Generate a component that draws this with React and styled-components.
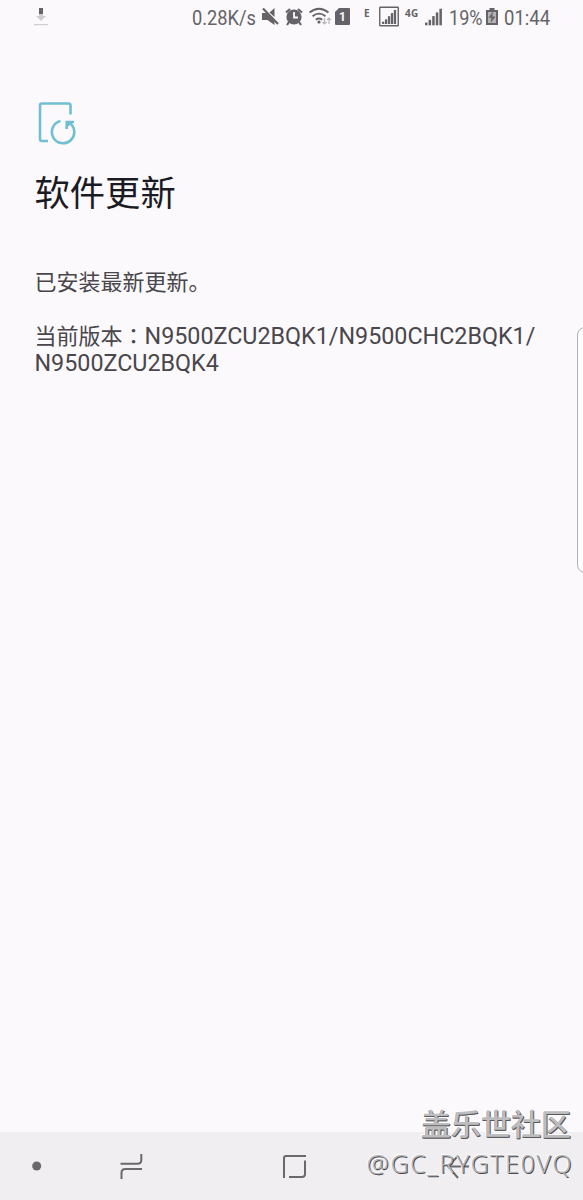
import React from 'react';
import styled, { createGlobalStyle } from 'styled-components';

const GlobalStyle = createGlobalStyle`
    * { box-sizing: border-box; }
    body {
        margin: 0;
        background: #fbf9fc;
        font-family: Roboto, "Noto Sans CJK SC", sans-serif;
    }
`;

const Screen = styled.div`
    position: relative;
    display: flex;
    flex-direction: column;
    width: 583px;
    height: 1200px;
    overflow: hidden;
    background: #fbf9fc;
`;

const StatusBar = styled.header`
    display: flex;
    align-items: flex-start;
    height: 36px;
    color: #656367;
`;

const StatusIcon = styled.svg`
    flex: none;
    width: ${(props) => props.$width}px;
    height: 36px;
    margin-left: ${(props) => props.$gap || 0}px;
    fill: currentColor;
`;

const StatusText = styled.span`
    flex: none;
    width: ${(props) => props.$width}px;
    margin-left: ${(props) => props.$gap}px;
    font-size: 21px;
    line-height: 36px;
    white-space: nowrap;
    transform: scaleX(${(props) => props.$squeeze});
    transform-origin: left;
`;

const NetworkType = styled.span`
    flex: none;
    width: ${(props) => props.$width}px;
    margin-left: ${(props) => props.$gap}px;
    font: bold 10px/26px "Noto Sans", sans-serif;
    letter-spacing: 0.4px;
`;

const Content = styled.main`
    flex: 1;
    padding: 65px 34.5px 0;
`;

const UpdateIcon = styled.svg`
    display: block;
    width: 42px;
    height: 44px;
    fill: none;
    stroke: #72bfd3;
    stroke-width: 2.6;
`;

const Title = styled.h1`
    margin: 23px 0 0;
    font-size: 35.3px;
    font-weight: 400;
    line-height: 52px;
    color: #1b1b23;
`;

const Message = styled.p`
    margin: ${(props) => props.$top}px 0 0;
    font-size: 22px;
    line-height: 27px;
    color: #49474b;
    white-space: nowrap;
`;

const Colon = styled.span`
    font-family: "Noto Sans CJK TC", sans-serif;
    line-height: 1;
`;

const Version = styled.span`
    font-size: 23.3px;
`;

const EdgeHandle = styled.div`
    position: absolute;
    top: 327px;
    left: 577px;
    width: 20px;
    height: 246px;
    border: 1px solid #b3b1b5;
    border-radius: 8px;
    background: #fdfcfe;
`;

const NavBar = styled.nav`
    display: flex;
    align-items: center;
    height: 68px;
    background: #f0eef1;
`;

const NavIcon = styled.svg`
    flex: none;
    width: ${(props) => props.$width}px;
    height: 68px;
    margin-left: ${(props) => props.$gap}px;
    fill: none;
    stroke: #6a686b;
    stroke-width: 2;
`;

const Watermark = styled.div`
    position: absolute;
    right: 12px;
    bottom: 18px;
    display: flex;
    flex-direction: column;
    align-items: flex-end;
    white-space: nowrap;
`;

const Community = styled.span`
    margin-bottom: 3px;
    font: 500 30px/40px "Noto Sans CJK SC", sans-serif;
    color: #bdbcbe;
    text-shadow: 1px 1px 0 #59585a, 0 1px 0 #59585a, -1px -1px 0 #ffffff;
`;

const UserName = styled.span`
    margin-right: -2px;
    font: 300 25px/37px "Noto Sans", sans-serif;
    letter-spacing: 1.6px;
    color: #b5b4b6;
    text-shadow: 1px 1px 0 #4b4a4c, -1px -1px 0 #fbfafc;
`;

const bars = [3, 6, 10, 14, 18];

const App = () => (
    <Screen>
        <GlobalStyle />
        <StatusBar>
            <StatusIcon $width={14} $gap={34} viewBox="0 0 14 36">
                <path d="M5 8h4v6H5z" />
                <path fill="#d0ced2" d="M5 14h4v2h3l-5 5-5-5h3zM0 24h14v1.3H0z" />
            </StatusIcon>
            <StatusText $width={65} $gap={144} $squeeze={0.87}>0.28K/s</StatusText>
            <StatusIcon $width={18} $gap={4} viewBox="0 0 18 36">
                <path d="M1 13h4.5l8 8V25l-7-5H1zM13.5 8v9L8.5 12.5z" />
                <path d="M2 8.5L17 24" stroke="currentColor" strokeWidth="2.2" />
            </StatusIcon>
            <StatusIcon $width={18} $gap={6} viewBox="0 0 18 36">
                <circle cx="9" cy="17" r="7.6" />
                <path d="M1 12.5L5 9M17 12.5L13 9M4 22l-2 3M14 22l2 3" stroke="currentColor" strokeWidth="2.2" />
                <path d="M9 12v5.5h4" fill="none" stroke="#fbf9fc" strokeWidth="1.8" />
            </StatusIcon>
            <StatusIcon $width={23} $gap={6} viewBox="0 0 23 36">
                <path d="M.5 12.5q9.5-7.5 19 0M3.5 16.2q6.5-5 13 0M6.8 19.7q3.2-2.5 6.4 0" fill="none" stroke="currentColor" strokeWidth="1.8" />
                <circle cx="10" cy="22" r="1.6" />
                <path d="M15.5 18v6M13.5 22l2 2 2-2M20 24v-6M18 20l2-2 2 2" fill="none" stroke="#b7b5b9" strokeWidth="1.2" />
            </StatusIcon>
            <StatusIcon $width={15} $gap={3} viewBox="0 0 15 36">
                <path d="M4 8h10a1 1 0 011 1v15a1 1 0 01-1 1H1a1 1 0 01-1-1V12z" />
                <text x="7.5" y="21" textAnchor="middle" fontSize="12" fontWeight="700" fill="#fbf9fc">1</text>
            </StatusIcon>
            <NetworkType $width={7} $gap={14}>E</NetworkType>
            <StatusIcon $width={20} $gap={8} viewBox="0 0 20 36">
                <rect x=".75" y="7.25" width="18.5" height="18.5" rx=".5" fill="none" stroke="currentColor" strokeWidth="1.4" />
                {bars.map((h, i) => (
                    <rect key={h} x={3 + i * 2.95} y={24 - h * 0.78} width="2.3" height={h * 0.78} />
                ))}
            </StatusIcon>
            <NetworkType $width={14} $gap={6}>4G</NetworkType>
            <StatusIcon $width={18} $gap={6} viewBox="0 0 18 36">
                {bars.map((h, i) => (
                    <rect key={h} x={i * 3.6} y={25.3 - h * 0.92} width="2.5" height={h * 0.92} />
                ))}
            </StatusIcon>
            <StatusText $width={34} $gap={6} $squeeze={0.86}>19%</StatusText>
            <StatusIcon $width={12} $gap={3} viewBox="0 0 12 36">
                <path d="M3.5 8h5v2H12v15H0V10h3.5z" />
                <path d="M2 12h8v11H2z" fill="#b4b2b6" />
                <path d="M7 11.5l-4.5 6.2h3L4.5 23l5-6.6H6.4z" />
            </StatusIcon>
            <StatusText $width={46} $gap={6} $squeeze={0.88}>01:44</StatusText>
        </StatusBar>
        <Content>
            <UpdateIcon viewBox="0 0 42 44">
                <path d="M13 40H7a2 2 0 01-2-2V4.5a2 2 0 012-2h26.5a2 2 0 012 2v9" />
                <path d="M25.5 20.1A11.2 11.2 0 1034 21.5" />
                <path d="M31 20.5h8l-8 7z" fill="#72bfd3" stroke="none" />
                <path d="M31.7 28v-7H39" />
            </UpdateIcon>
            <Title>软件更新</Title>
            <Message $top={49}>已安装最新更新。</Message>
            <Message $top={27}>
                当前版本<Colon>：</Colon><Version>N9500ZCU2BQK1/N9500CHC2BQK1/<br />N9500ZCU2BQK4</Version>
            </Message>
        </Content>
        <EdgeHandle />
        <NavBar>
            <NavIcon $width={10} $gap={32} viewBox="0 0 10 68">
                <circle cx="4.7" cy="34" r="4.5" fill="#6a686b" stroke="none" />
            </NavIcon>
            <NavIcon $width={24} $gap={78} viewBox="0 0 24 68">
                <path d="M.5 31.8h17q3.8 0 3.8-3.8v-6M22 37H5.2q-3.7 0-3.7 3.8V47" />
            </NavIcon>
            <NavIcon $width={24} $gap={139} viewBox="0 0 24 68">
                <path d="M1 46V26q0-2 2-2h20M22 28.5V42q0 3-3 3H6" />
            </NavIcon>
            <NavIcon $width={24} $gap={140} viewBox="0 0 24 68">
                <path d="M22 34.5H1M11 24L1 34.5 11 46" />
            </NavIcon>
        </NavBar>
        <Watermark>
            <Community>盖乐世社区</Community>
            <UserName>@GC_RYGTE0VQ</UserName>
        </Watermark>
    </Screen>
);

export default App;
